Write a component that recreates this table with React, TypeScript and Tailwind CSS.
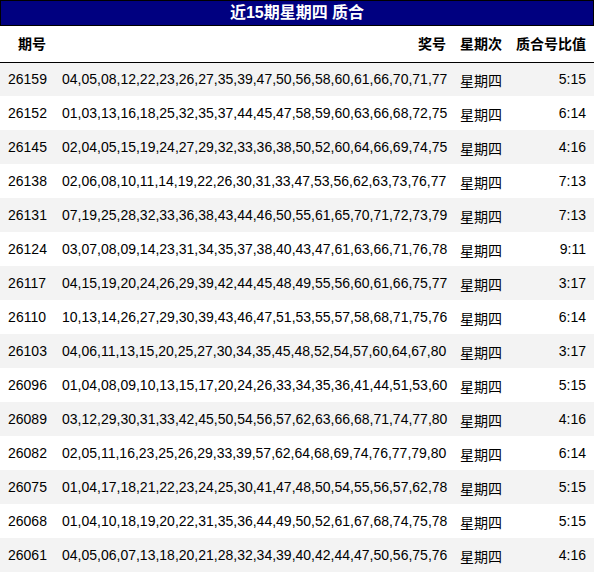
import React from 'react';

const rows = [
  ['26159', '04,05,08,12,22,23,26,27,35,39,47,50,56,58,60,61,66,70,71,77', '5:15'],
  ['26152', '01,03,13,16,18,25,32,35,37,44,45,47,58,59,60,63,66,68,72,75', '6:14'],
  ['26145', '02,04,05,15,19,24,27,29,32,33,36,38,50,52,60,64,66,69,74,75', '4:16'],
  ['26138', '02,06,08,10,11,14,19,22,26,30,31,33,47,53,56,62,63,73,76,77', '7:13'],
  ['26131', '07,19,25,28,32,33,36,38,43,44,46,50,55,61,65,70,71,72,73,79', '7:13'],
  ['26124', '03,07,08,09,14,23,31,34,35,37,38,40,43,47,61,63,66,71,76,78', '9:11'],
  ['26117', '04,15,19,20,24,26,29,39,42,44,45,48,49,55,56,60,61,66,75,77', '3:17'],
  ['26110', '10,13,14,26,27,29,30,39,43,46,47,51,53,55,57,58,68,71,75,76', '6:14'],
  ['26103', '04,06,11,13,15,20,25,27,30,34,35,45,48,52,54,57,60,64,67,80', '3:17'],
  ['26096', '01,04,08,09,10,13,15,17,20,24,26,33,34,35,36,41,44,51,53,60', '5:15'],
  ['26089', '03,12,29,30,31,33,42,45,50,54,56,57,62,63,66,68,71,74,77,80', '4:16'],
  ['26082', '02,05,11,16,23,25,26,29,33,39,57,62,64,68,69,74,76,77,79,80', '6:14'],
  ['26075', '01,04,17,18,21,22,23,24,25,30,41,47,48,50,54,55,56,57,62,78', '5:15'],
  ['26068', '01,04,10,18,19,20,22,31,35,36,44,49,50,52,61,67,68,74,75,78', '5:15'],
  ['26061', '04,05,06,07,13,18,20,21,28,32,34,39,40,42,44,47,50,56,75,76', '4:16'],
];

export default function App() {
  return (
    <div className="w-[594px] bg-white text-black font-['Liberation_Sans','Noto_Sans_CJK_SC',sans-serif]">
      <div className="h-[26px] border border-black bg-[#000080] text-white font-bold text-[16px] leading-[24px] text-center">
        近15期星期四 质合
      </div>
      <table className="w-full table-fixed border-collapse text-[14px] whitespace-nowrap">
        <colgroup>
          <col className="w-[54px]" />
          <col className="w-[400px]" />
          <col className="w-[54px]" />
          <col className="w-[86px]" />
        </colgroup>
        <thead>
          <tr className="h-[36px] border-b border-black">
            <th className="px-2 pt-[2px] text-right font-bold">期号</th>
            <th className="px-2 pt-[2px] text-right font-bold">奖号</th>
            <th className="px-[6px] pt-[2px] text-left font-bold">星期次</th>
            <th className="px-2 pt-[2px] text-right font-bold">质合号比值</th>
          </tr>
        </thead>
        <tbody>
          {rows.map((r, i) => (
            <tr key={r[0]} className={`h-[34px] ${i % 2 === 0 ? 'bg-[#f3f3f3]' : 'bg-white'}`}>
              <td className="px-2 text-right">{r[0]}</td>
              <td className="px-2 text-right">{r[1]}</td>
              <td className="px-[6px] text-left pt-[4px]">星期四</td>
              <td className="px-2 text-right">{r[2]}</td>
            </tr>
          ))}
        </tbody>
      </table>
    </div>
  );
}
